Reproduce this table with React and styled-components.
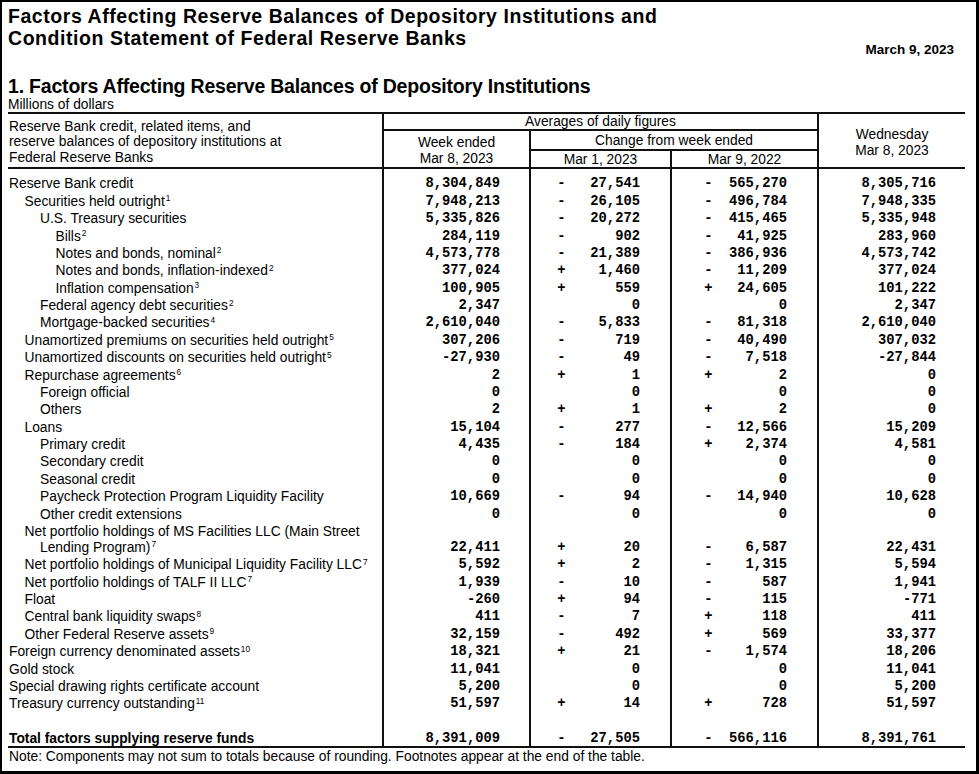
import React from "react";
import styled, { createGlobalStyle } from "styled-components";

const GlobalStyle = createGlobalStyle`
  html, body { margin: 0; padding: 0; background: #fff; }
  body { font-family: "Liberation Sans", Arial, sans-serif; color: #000; }
`;

const COLS = "374px 147px 141px 147px 148px";
const RULE = "2px solid #111";

const Page = styled.div`
  width: 979px;
  height: 774px;
  box-sizing: border-box;
  border: 2px solid #000;
  border-right-width: 3px;
  border-bottom-width: 3px;
  padding: 3px 0 0 6px;
  background: #fff;
`;

const Header = styled.header`
  width: 957px;
  display: flex;
  justify-content: space-between;
  align-items: flex-end;
`;

const Title = styled.h1`
  margin: 0 0 9px;
  font: 700 19.5px/22px "Liberation Sans", Arial, sans-serif;
  letter-spacing: 0.55px;
`;

const DateStamp = styled.div`
  margin-right: 11px;
  font: 700 13.5px/16px "Liberation Sans", Arial, sans-serif;
`;

const SectionTitle = styled.h2`
  margin: 17px 0 0;
  font: 700 19.5px/22px "Liberation Sans", Arial, sans-serif;
  letter-spacing: -0.2px;
`;

const Units = styled.div`
  margin-top: -0.5px;
  font: 13.8px/15px "Liberation Sans", Arial, sans-serif;
`;

const Table = styled.div`
  width: 957px;
  font: 13.8px "Liberation Sans", Arial, sans-serif;
`;

const HeadGrid = styled.div`
  display: grid;
  grid-template-columns: ${COLS};
  grid-template-rows: 17px 20px 16px;
  border-top: ${RULE};
  border-bottom: ${RULE};
`;

const HeadCell = styled.div`
  grid-column: ${(p) => p.$col};
  grid-row: ${(p) => p.$row};
  display: flex;
  flex-direction: column;
  justify-content: center;
  align-items: ${(p) => (p.$left ? "flex-start" : "center")};
  padding: ${(p) => p.$drop ?? 2}px 0 0 ${(p) => (p.$left ? "1px" : "0")};
  line-height: ${(p) => (p.$left ? "15.5px" : "16px")};
  border-left: ${(p) => (p.$left ? "none" : RULE)};
  border-bottom: ${(p) => (p.$under ? RULE : "none")};
  text-align: ${(p) => (p.$left ? "left" : "center")};
  white-space: nowrap;
`;

const Row = styled.div`
  display: grid;
  grid-template-columns: ${COLS};
  border-bottom: ${(p) => (p.$total ? RULE : "none")};
`;

const Label = styled.div`
  padding: 0.7px 0 ${(p) => (p.$total ? "0" : "0.7px")} ${(p) => 1 + (p.$level + 1) * 15.5}px;
  line-height: ${(p) => (p.$total ? "14px" : "16px")};
  font-weight: ${(p) => (p.$total ? 700 : 400)};
`;

const LabelLine = styled.span`
  display: block;
  text-indent: ${(p) => (p.$cont ? "0" : "-15.5px")};
  white-space: nowrap;
`;

const Sup = styled.sup`
  font-size: 8.3px;
  line-height: 0;
  vertical-align: 4.5px;
  margin-left: 1px;
`;

const NumCell = styled.div`
  border-left: ${RULE};
  display: flex;
  justify-content: flex-end;
  align-items: flex-end;
  padding: 0.7px ${(p) => p.$pad}px ${(p) => (p.$total ? "0" : "0.7px")} 0;
  font: 700 13.8px/${(p) => (p.$total ? "14px" : "16px")} "Liberation Mono", "Courier New", monospace;
  white-space: pre;
`;

const Sign = styled.span`
  width: 1ch;
  text-align: center;
`;

const Value = styled.span`
  width: 9ch;
  text-align: right;
`;

const Gap = styled.div`
  height: ${(p) => p.$h}px;
  border-left: ${(p) => (p.$rule ? RULE : "none")};
`;

const Note = styled.div`
  font: 13.8px/15px "Liberation Sans", Arial, sans-serif;
  padding: 1.5px 0 0 1px;
`;

const rows = [
  ["Reserve Bank credit", 0, "", "8,304,849", "-", "27,541", "-", "565,270", "8,305,716"],
  ["Securities held outright", 1, "1", "7,948,213", "-", "26,105", "-", "496,784", "7,948,335"],
  ["U.S. Treasury securities", 2, "", "5,335,826", "-", "20,272", "-", "415,465", "5,335,948"],
  ["Bills", 3, "2", "284,119", "-", "902", "-", "41,925", "283,960"],
  ["Notes and bonds, nominal", 3, "2", "4,573,778", "-", "21,389", "-", "386,936", "4,573,742"],
  ["Notes and bonds, inflation-indexed", 3, "2", "377,024", "+", "1,460", "-", "11,209", "377,024"],
  ["Inflation compensation", 3, "3", "100,905", "+", "559", "+", "24,605", "101,222"],
  ["Federal agency debt securities", 2, "2", "2,347", "", "0", "", "0", "2,347"],
  ["Mortgage-backed securities", 2, "4", "2,610,040", "-", "5,833", "-", "81,318", "2,610,040"],
  ["Unamortized premiums on securities held outright", 1, "5", "307,206", "-", "719", "-", "40,490", "307,032"],
  ["Unamortized discounts on securities held outright", 1, "5", "-27,930", "-", "49", "-", "7,518", "-27,844"],
  ["Repurchase agreements", 1, "6", "2", "+", "1", "+", "2", "0"],
  ["Foreign official", 2, "", "0", "", "0", "", "0", "0"],
  ["Others", 2, "", "2", "+", "1", "+", "2", "0"],
  ["Loans", 1, "", "15,104", "-", "277", "-", "12,566", "15,209"],
  ["Primary credit", 2, "", "4,435", "-", "184", "+", "2,374", "4,581"],
  ["Secondary credit", 2, "", "0", "", "0", "", "0", "0"],
  ["Seasonal credit", 2, "", "0", "", "0", "", "0", "0"],
  ["Paycheck Protection Program Liquidity Facility", 2, "", "10,669", "-", "94", "-", "14,940", "10,628"],
  ["Other credit extensions", 2, "", "0", "", "0", "", "0", "0"],
  ["Net portfolio holdings of MS Facilities LLC (Main Street\nLending Program)", 1, "7", "22,411", "+", "20", "-", "6,587", "22,431"],
  ["Net portfolio holdings of Municipal Liquidity Facility LLC", 1, "7", "5,592", "+", "2", "-", "1,315", "5,594"],
  ["Net portfolio holdings of TALF II LLC", 1, "7", "1,939", "-", "10", "-", "587", "1,941"],
  ["Float", 1, "", "-260", "+", "94", "-", "115", "-771"],
  ["Central bank liquidity swaps", 1, "8", "411", "-", "7", "+", "118", "411"],
  ["Other Federal Reserve assets", 1, "9", "32,159", "-", "492", "+", "569", "33,377"],
  ["Foreign currency denominated assets", 0, "10", "18,321", "+", "21", "-", "1,574", "18,206"],
  ["Gold stock", 0, "", "11,041", "", "0", "", "0", "11,041"],
  ["Special drawing rights certificate account", 0, "", "5,200", "", "0", "", "0", "5,200"],
  ["Treasury currency outstanding", 0, "11", "51,597", "+", "14", "+", "728", "51,597"],
];

const total = ["Total factors supplying reserve funds", 0, "", "8,391,009", "-", "27,505", "-", "566,116", "8,391,761"];

const PADS = [29, 30, 30, 29];

const Spacer = ({ h }) => (
  <Row>
    <Gap $h={h} />
    <Gap $h={h} $rule />
    <Gap $h={h} $rule />
    <Gap $h={h} $rule />
    <Gap $h={h} $rule />
  </Row>
);

const DataRow = ({ data, isTotal }) => {
  const [label, level, sup, c1, s2, v2, s3, v3, c4] = data;
  const lines = label.split("\n");
  return (
    <Row $total={isTotal}>
      <Label $level={level} $total={isTotal}>
        {lines.map((text, i) => (
          <LabelLine key={i} $cont={i > 0}>
            {text}
            {sup && i === lines.length - 1 && <Sup>{sup}</Sup>}
          </LabelLine>
        ))}
      </Label>
      <NumCell $pad={PADS[0]} $total={isTotal}>{c1}</NumCell>
      <NumCell $pad={PADS[1]} $total={isTotal}>
        <Sign>{s2}</Sign>
        <Value>{v2}</Value>
      </NumCell>
      <NumCell $pad={PADS[2]} $total={isTotal}>
        <Sign>{s3}</Sign>
        <Value>{v3}</Value>
      </NumCell>
      <NumCell $pad={PADS[3]} $total={isTotal}>{c4}</NumCell>
    </Row>
  );
};

export default function App() {
  return (
    <Page>
      <GlobalStyle />
      <Header>
        <Title>
          Factors Affecting Reserve Balances of Depository Institutions and
          <br />
          Condition Statement of Federal Reserve Banks
        </Title>
        <DateStamp>March 9, 2023</DateStamp>
      </Header>
      <SectionTitle>1. Factors Affecting Reserve Balances of Depository Institutions</SectionTitle>
      <Units>Millions of dollars</Units>
      <Table>
        <HeadGrid>
          <HeadCell $col="1" $row="1 / 4" $left $drop={4}>
            <span>Reserve Bank credit, related items, and</span>
            <span>reserve balances of depository institutions at</span>
            <span>Federal Reserve Banks</span>
          </HeadCell>
          <HeadCell $col="2 / 5" $row="1" $under>Averages of daily figures</HeadCell>
          <HeadCell $col="2" $row="2 / 4" $drop={4}>
            <span>Week ended</span>
            <span>Mar 8, 2023</span>
          </HeadCell>
          <HeadCell $col="3 / 5" $row="2" $under>Change from week ended</HeadCell>
          <HeadCell $col="3" $row="3">Mar 1, 2023</HeadCell>
          <HeadCell $col="4" $row="3">Mar 9, 2022</HeadCell>
          <HeadCell $col="5" $row="1 / 4" $drop={5}>
            <span>Wednesday</span>
            <span>Mar 8, 2023</span>
          </HeadCell>
        </HeadGrid>
        <Spacer h={7.3} />
        {rows.map((r) => (
          <DataRow key={r[0]} data={r} />
        ))}
        <Spacer h={18} />
        <DataRow data={total} isTotal />
      </Table>
      <Note>
        Note: Components may not sum to totals because of rounding. Footnotes appear at the end of the table.
      </Note>
    </Page>
  );
}
